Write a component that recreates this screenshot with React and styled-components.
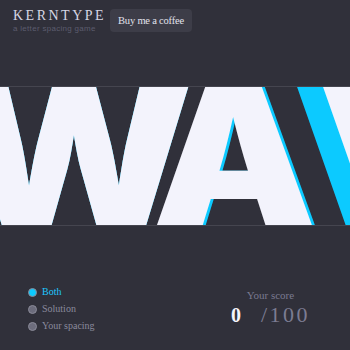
import React from "react";
import styled, { createGlobalStyle } from "styled-components";

const GlobalStyle = createGlobalStyle`
  html, body {
    margin: 0;
    padding: 0;
    background: #30303a;
  }
  body {
    width: 350px;
    height: 350px;
    overflow: hidden;
    font-family: "Liberation Serif", Georgia, serif;
  }
`;

// offsets are the kerning before each glyph; solution vs what the player set
const letters = [
  { ch: "W", scale: 1.15, you: -30, solution: -30 },
  { ch: "A", scale: 1.08, you: -20, solution: -17 },
  { ch: "V", scale: 1.05, you: 12, solution: -17 },
  { ch: "E", scale: 1, you: -10, solution: -10 },
];

export default function App() {
  return (
    <Page>
      <GlobalStyle />
      <Header>
        <Brand>
          <Logo>KERNTYPE</Logo>
          <Tagline>a letter spacing game</Tagline>
        </Brand>
        <CoffeeButton>Buy me a coffee</CoffeeButton>
      </Header>

      <Stage>
        <Word>
          {letters.map((l, i) => (
            <Letter key={i} $offset={l.solution} $scale={l.scale} $solution>
              {l.ch}
            </Letter>
          ))}
        </Word>
        <Word>
          {letters.map((l, i) => (
            <Letter key={i} $offset={l.you} $scale={l.scale}>
              {l.ch}
            </Letter>
          ))}
        </Word>
      </Stage>

      <Footer>
        <Options>
          <Option $active>
            <Dot $active />
            Both
          </Option>
          <Option>
            <Dot />
            Solution
          </Option>
          <Option>
            <Dot />
            Your spacing
          </Option>
        </Options>
        <Score>
          <ScoreLabel>Your score</ScoreLabel>
          <ScoreRow>
            <Points>0</Points>
            <Total>/100</Total>
          </ScoreRow>
        </Score>
      </Footer>
    </Page>
  );
}

const Page = styled.div`
  width: 350px;
  height: 350px;
  display: flex;
  flex-direction: column;
  background: #30303a;
`;

const Header = styled.div`
  display: flex;
  align-items: flex-start;
  gap: 14px;
  padding: 9px 0 0 13px;
  height: 86px;
  box-sizing: border-box;
`;

const Brand = styled.div`
  display: flex;
  flex-direction: column;
  width: 83px;
`;

const Logo = styled.div`
  font-family: "Liberation Serif", Georgia, serif;
  font-size: 14px;
  line-height: 14px;
  letter-spacing: 2.5px;
  white-space: nowrap;
  color: #d6d6e4;
`;

const Tagline = styled.div`
  font-family: "Liberation Sans", Arial, sans-serif;
  font-size: 8px;
  line-height: 10px;
  margin-top: 1px;
  letter-spacing: 0.3px;
  white-space: nowrap;
  color: #5c5c6e;
`;

const CoffeeButton = styled.button`
  font-family: "Liberation Serif", Georgia, serif;
  font-size: 10.5px;
  letter-spacing: -0.2px;
  color: #e2e2ec;
  background: #3d3d48;
  border: none;
  border-radius: 4px;
  height: 23px;
  width: 82px;
  padding: 0;
`;

const Stage = styled.div`
  position: relative;
  height: 138px;
  border-top: 1px solid #45454f;
  border-bottom: 1px solid #45454f;
  overflow: hidden;
`;

const Word = styled.div`
  position: absolute;
  left: 0;
  top: -27px;
  display: flex;
  white-space: nowrap;
  font-family: "Inter", "Noto Sans", sans-serif;
  font-weight: 900;
  font-size: 192px;
  line-height: 192px;
`;

const Letter = styled.span`
  display: inline-block;
  margin-left: ${(p) => p.$offset}px;
  transform: scaleX(${(p) => p.$scale});
  transform-origin: center;
  color: ${(p) => (p.$solution ? "#0ccaff" : "#f3f3fc")};
`;

const Footer = styled.div`
  display: flex;
  justify-content: space-between;
  padding: 60px 40px 0 28px;
`;

const Options = styled.div`
  display: flex;
  flex-direction: column;
  gap: 5px;
`;

const Option = styled.div`
  display: flex;
  align-items: center;
  gap: 5px;
  font-size: 10px;
  line-height: 12px;
  color: ${(p) => (p.$active ? "#1ec8ff" : "#8a8a9c")};
`;

const Dot = styled.span`
  width: 7px;
  height: 7px;
  border-radius: 50%;
  background: ${(p) => (p.$active ? "#0ccaff" : "#6c6c7c")};
  border: 1px solid #8a8a98;
`;

const Score = styled.div`
  display: flex;
  flex-direction: column;
  align-items: center;
  padding-top: 3px;
`;

const ScoreLabel = styled.div`
  font-size: 11px;
  line-height: 12px;
  color: #7a7a90;
`;

const ScoreRow = styled.div`
  display: flex;
  align-items: baseline;
  gap: 20px;
  line-height: 28px;
`;

const Points = styled.span`
  font-size: 20px;
  font-weight: bold;
  color: #f4f4fa;
`;

const Total = styled.span`
  font-size: 22px;
  letter-spacing: 2.5px;
  color: #7c7c92;
`;
